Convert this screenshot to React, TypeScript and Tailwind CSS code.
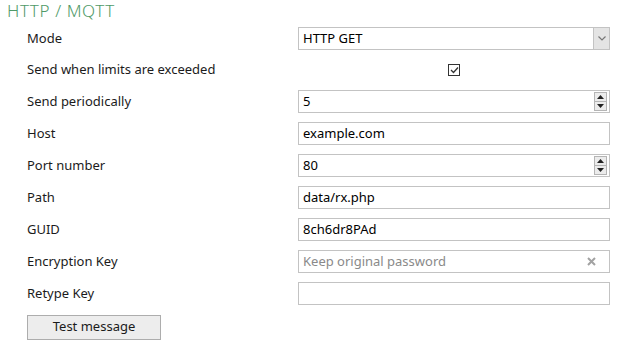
import { ReactNode } from 'react'

const font = { fontFamily: '"Noto Sans", "Open Sans", sans-serif' }

function Row({ label, children, h = 'h-[32px]' }: { label: string; children?: ReactNode; h?: string }) {
  return (
    <div className={`grid grid-cols-[271px_312px] items-center ${h}`}>
      <div className="text-[13px] text-[#1b1b1b]">{label}</div>
      <div className="flex items-center justify-center">{children}</div>
    </div>
  )
}

function Box({ children }: { children?: ReactNode }) {
  return (
    <div className="flex h-[23px] w-full items-center border border-[#c3c3c3] bg-white pl-[4px] pr-[2px] text-[13px] text-black">
      {children}
    </div>
  )
}

function Spinner() {
  return (
    <div className="ml-auto flex h-[19px] w-[13px] flex-col border border-[#b5b5b5] bg-[#ececec]">
      <div className="flex flex-1 items-center justify-center border-b border-[#b5b5b5]">
        <svg width="7" height="4" viewBox="0 0 7 4">
          <path d="M0 4 L3.5 0 L7 4 Z" fill="#222" />
        </svg>
      </div>
      <div className="flex flex-1 items-center justify-center">
        <svg width="7" height="4" viewBox="0 0 7 4">
          <path d="M0 0 L3.5 4 L7 0 Z" fill="#222" />
        </svg>
      </div>
    </div>
  )
}

export default function App() {
  return (
    <div className="h-[351px] w-[626px] bg-white" style={font}>
      <div className="h-[22.5px] pl-[7px] text-[17px] leading-[22px] font-light tracking-[0.6px] text-[#4f9a68]">HTTP / MQTT</div>
      <div className="pl-[27px]">
        <Row label="Mode">
          <Box>
            <span>HTTP GET</span>
            <div className="ml-auto flex h-[21px] w-[16px] items-center justify-center border-l border-[#c3c3c3] bg-[#e4e4e4] -mr-[2px]">
              <svg width="8" height="5" viewBox="0 0 8 5">
                <path d="M0.5 0.5 L4 4 L7.5 0.5" fill="none" stroke="#777" strokeWidth="1.2" />
              </svg>
            </div>
          </Box>
        </Row>
        <Row label="Send when limits are exceeded" h="h-[31px]">
          <div className="flex h-[12px] w-[12px] items-center justify-center border border-[#333] bg-white">
            <svg width="9" height="8" viewBox="0 0 9 8">
              <path d="M1 4 L3.5 6.5 L8 1.5" fill="none" stroke="#333" strokeWidth="1.3" />
            </svg>
          </div>
        </Row>
        <Row label="Send periodically">
          <Box>
            <span>5</span>
            <Spinner />
          </Box>
        </Row>
        <Row label="Host">
          <Box>example.com</Box>
        </Row>
        <Row label="Port number">
          <Box>
            <span>80</span>
            <Spinner />
          </Box>
        </Row>
        <Row label="Path">
          <Box>data/rx.php</Box>
        </Row>
        <Row label="GUID">
          <Box>8ch6dr8PAd</Box>
        </Row>
        <Row label="Encryption Key">
          <Box>
            <span className="text-[#8a8a8a]">Keep original password</span>
            <svg className="ml-auto mr-[11px]" width="9" height="9" viewBox="0 0 9 9">
              <path d="M1 1 L8 8 M8 1 L1 8" stroke="#a2a2a2" strokeWidth="2" />
            </svg>
          </Box>
        </Row>
        <Row label="Retype Key">
          <Box />
        </Row>
        <button className="mt-[5px] h-[25px] w-[134px] border border-[#adadad] bg-[#ededed] text-[13px] text-[#1b1b1b]">
          Test message
        </button>
      </div>
    </div>
  )
}
